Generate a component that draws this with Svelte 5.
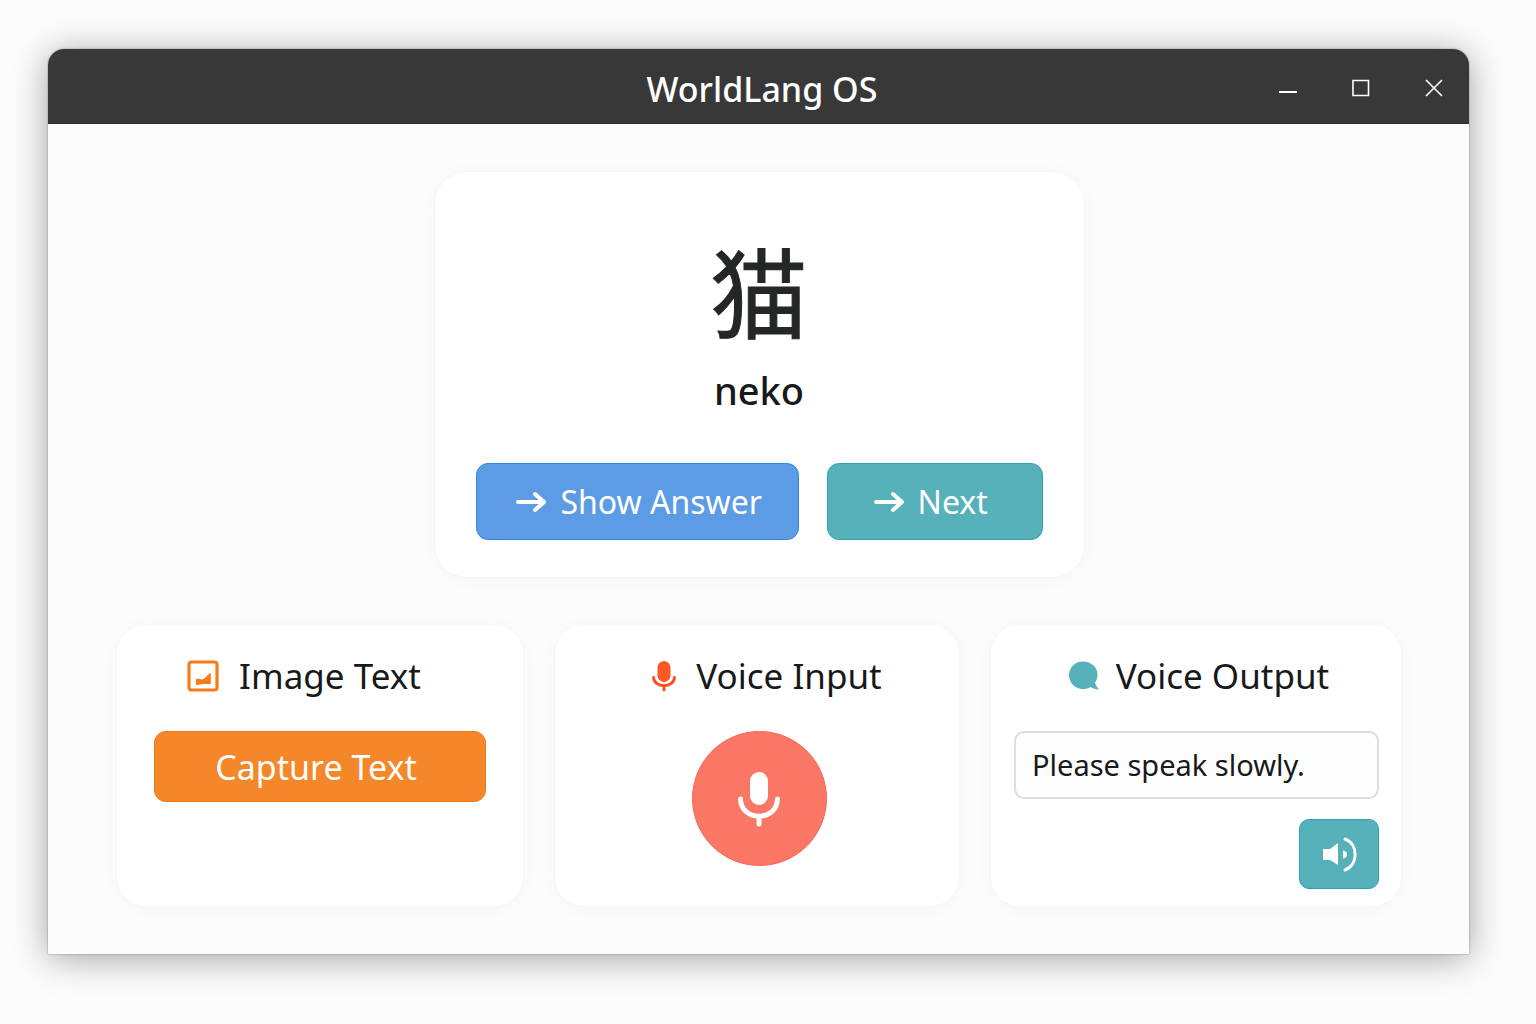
<script>
  let phrase = $state('Please speak slowly.');
</script>

{#snippet arrow()}
  <svg class="arrow" viewBox="0 0 30 22" aria-hidden="true">
    <path d="M2 11H27M19 3l9 8-9 8" />
  </svg>
{/snippet}

<div class="desktop">
  <div class="window">
    <header class="titlebar">
      <h1>WorldLang OS</h1>
      <div class="controls">
        <button aria-label="Minimize">
          <svg viewBox="0 0 20 20"><path d="M1 14H19" stroke-width="2" /></svg>
        </button>
        <button aria-label="Maximize">
          <svg viewBox="0 0 20 20"><path d="M2 2.500H17.500V17.500H2Z" stroke-width="1.600" /></svg>
        </button>
        <button aria-label="Close">
          <svg viewBox="0 0 20 20"><path d="M2 2L18 18M18 2L2 18" stroke-width="1.700" /></svg>
        </button>
      </div>
    </header>

    <main>
      <section class="card flashcard">
        <div class="word" lang="ja">猫</div>
        <div class="reading">neko</div>
        <div class="actions">
          <button class="btn blue">{@render arrow()}Show Answer</button>
          <button class="btn teal next">{@render arrow()}Next</button>
        </div>
      </section>

      <div class="tools">
        <section class="card image">
          <h2>
            <svg class="icon" viewBox="0 0 32 32" aria-hidden="true">
              <rect x="2" y="2" width="28" height="28" rx="2.500" fill="none" stroke="#f57c17" stroke-width="3.200" />
              <path d="M9 19C11.500 17.800 14 20.300 16.500 19C19 18 20.500 14.500 23.800 12.800V24H15L9 25.200Z" fill="#f57c17" />
            </svg>
            Image Text
          </h2>
          <button class="btn orange">Capture Text</button>
        </section>

        <section class="card input">
          <h2>
            <svg class="mic-small" viewBox="0 0 24 32" aria-hidden="true">
              <rect x="5.500" y="1" width="13" height="21" rx="6.500" fill="#fb5a26" />
              <path d="M1.500 17.500C2.500 28.500 21.500 28.500 22.500 17.500M12 26V30" fill="none" stroke="#fb4d1c" stroke-width="2.800" stroke-linecap="round" />
            </svg>
            Voice Input
          </h2>
          <button class="record" aria-label="Start recording">
            <svg viewBox="0 0 44 56" aria-hidden="true">
              <rect x="13" y="1" width="18" height="33" rx="9" fill="#fff" />
              <path d="M3.500 28C4 51 40 51 40.500 28M22 46V53" fill="none" stroke="#fff" stroke-width="5" stroke-linecap="round" />
            </svg>
          </button>
        </section>

        <section class="card output">
          <h2>
            <svg class="icon" viewBox="0 0 32 32" aria-hidden="true">
              <path d="M15 1.500C23 1.500 29.500 7 29.500 14.500C29.500 18 28.500 20.500 27 22.500C27.500 25 29 27 31 29.500C27.500 29.500 25 28.500 22.500 27C20 28.500 18 29 15 29C6.500 29 1 22.500 1 15C1 7.500 7 1.500 15 1.500Z" fill="#56b1ba" />
            </svg>
            <label for="phrase">Voice Output</label>
          </h2>
          <input id="phrase" type="text" bind:value={phrase} />
          <button class="btn teal speak" aria-label="Play phrase">
            <svg viewBox="0 0 36 36" aria-hidden="true">
              <path d="M2 13H9L17 7V29L9 24H2Z" fill="#fff" />
              <path d="M22 14.500C27.500 15 27.500 22 22 22.500Z" fill="#fff" />
              <path d="M24 3C37.500 8 37.500 29 24 34" fill="none" stroke="#fff" stroke-width="3" stroke-linecap="round" />
            </svg>
          </button>
        </section>
      </div>
    </main>
  </div>
</div>

<style>
  :global(body) {
    background: #fcfcfc;
  }

  .desktop {
    box-sizing: border-box;
    min-height: 100vh;
    padding: 49px 67px 70px 48px;
    display: flex;
    font-family: 'Noto Sans', 'Noto Sans CJK JP', sans-serif;
    color: #17191a;
  }

  .window {
    flex: 1;
    min-width: 0;
    display: flex;
    flex-direction: column;
    background: #fcfcfc;
    border-radius: 16px 16px 0 0;
    box-shadow: 0 0 2px rgba(0, 0, 0, 0.4), 0 4px 36px rgba(0, 0, 0, 0.36);
  }

  .titlebar {
    box-sizing: border-box;
    display: grid;
    grid-template-columns: 1fr auto 1fr;
    align-items: center;
    height: 75px;
    padding: 3px 15px 0 22px;
    background: #383838;
    border-bottom: 1px solid #2a2a2a;
    border-radius: 16px 16px 0 0;
    color: #fff;
  }

  h1 {
    grid-column: 2;
    margin: 0;
    padding-top: 2px;
    font-size: 34px;
    font-weight: 500;
    line-height: 48px;
  }

  .controls {
    display: flex;
    justify-content: flex-end;
    gap: 33px;
  }

  .controls button {
    display: flex;
    align-items: center;
    justify-content: center;
    width: 40px;
    height: 40px;
    padding: 0;
    border: 0;
    background: none;
  }

  .controls svg {
    width: 20px;
    height: 20px;
    fill: none;
    stroke: #fff;
  }

  main {
    flex: 1;
    display: flex;
    flex-direction: column;
    gap: 48px;
    padding: 48px 68px 48px 69px;
  }

  .card {
    box-sizing: border-box;
    background: #fff;
    border-radius: 28px;
    box-shadow: 0 0 2px rgba(0, 0, 0, 0.04), 0 2px 20px rgba(0, 0, 0, 0.03);
  }

  .flashcard {
    align-self: center;
    width: 100%;
    max-width: 649px;
    padding: 56px 41px 37px;
    border-radius: 32px;
    text-align: center;
  }

  .word {
    font-family: 'Noto Sans CJK JP', sans-serif;
    font-size: 98px;
    font-weight: 400;
    -webkit-text-stroke: 1px #242627;
    line-height: 120px;
    color: #242627;
  }

  .reading {
    margin: 6px 0 37px;
    font-size: 38px;
    font-weight: 500;
    line-height: 72px;
  }

  .actions {
    display: grid;
    grid-template-columns: 3fr 2fr;
    gap: 28px;
  }

  .btn {
    box-sizing: border-box;
    display: flex;
    align-items: center;
    justify-content: center;
    gap: 14px;
    height: 77px;
    padding: 0 8px 0 0;
    border: 1px solid;
    border-radius: 12px;
    font-family: inherit;
    font-size: 32px;
    line-height: 40px;
    color: #fff;
  }

  .blue {
    background: #5c9ce4;
    border-color: #3388e2;
    padding: 0 0 0 4px;
  }

  .teal {
    background: #56b1ba;
    border-color: #2fa3ad;
  }

  .orange {
    width: 100%;
    height: 71px;
    background: #f48729;
    border-color: #f4750d;
    font-size: 34px;
  }

  .arrow {
    width: 30px;
    height: 22px;
    fill: none;
    stroke: #fff;
    stroke-width: 4;
    stroke-linejoin: round;
    stroke-linecap: round;
  }

  .tools {
    flex: 1;
    display: grid;
    grid-template-columns: 406fr 404fr 410fr;
    gap: 32px;
  }

  .tools .card {
    display: flex;
    flex-direction: column;
    align-items: center;
    padding: 27px 37px 16px;
  }

  .tools .input {
    padding: 27px 36px 16px 40px;
  }

  .tools .output {
    align-items: stretch;
    padding: 27px 22px 16px 23px;
  }

  h2 {
    display: flex;
    align-items: center;
    justify-content: center;
    gap: 20px;
    margin: 0 0 31px;
    font-size: 35px;
    font-weight: 400;
    line-height: 48px;
    white-space: nowrap;
  }

  .image h2 {
    padding-right: 32px;
  }

  .input h2 {
    padding-left: 16px;
  }

  .output h2 {
    gap: 16px;
    padding-left: 4px;
  }

  .icon {
    width: 32px;
    height: 32px;
  }

  .mic-small {
    width: 24px;
    height: 32px;
  }

  .record {
    display: flex;
    align-items: center;
    justify-content: center;
    width: 135px;
    height: 135px;
    padding: 0;
    border: 1px solid #f76554;
    border-radius: 50%;
    background: #fa7766;
  }

  .record svg {
    width: 44px;
    height: 56px;
  }

  input {
    box-sizing: border-box;
    width: 100%;
    height: 68px;
    padding: 0 16px 2px;
    border: 2px solid #dddde0;
    border-radius: 10px;
    background: #fdfdfd;
    font-family: inherit;
    font-size: 29px;
    color: #17191a;
  }

  .speak {
    align-self: flex-end;
    width: 80px;
    height: 70px;
    margin-top: 20px;
    padding: 0;
    border-radius: 10px;
  }

  .speak svg {
    width: 36px;
    height: 36px;
  }
</style>
